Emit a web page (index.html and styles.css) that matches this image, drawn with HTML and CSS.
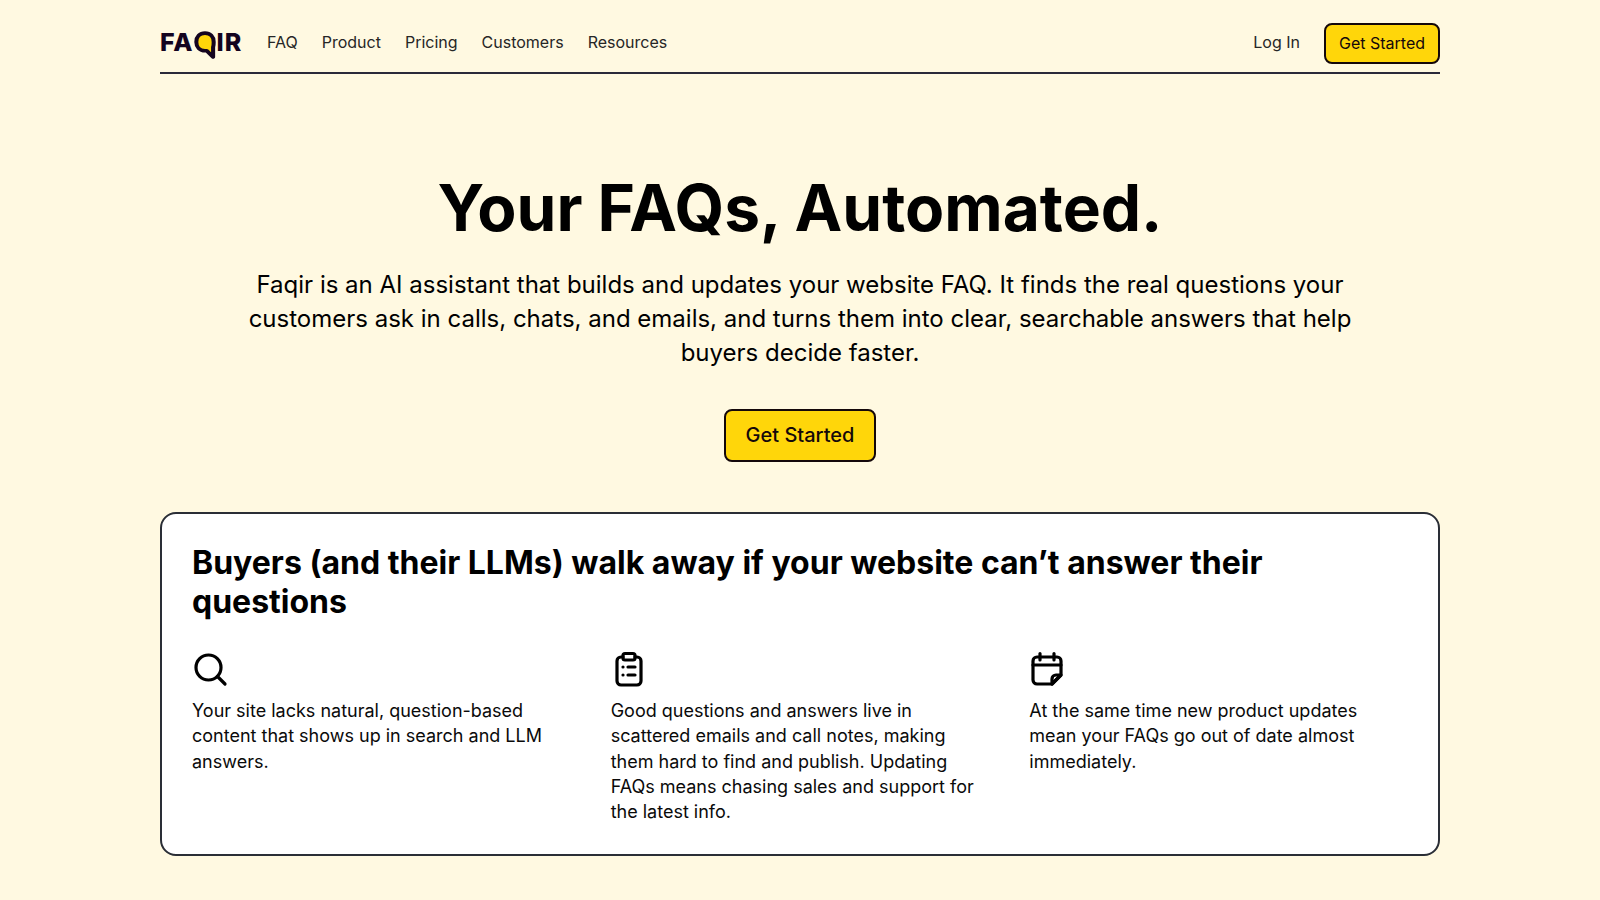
FILE: index.html
```html
<!DOCTYPE html>
<html lang="en">
<head>
<meta charset="utf-8">
<title>Faqir</title>
<link rel="stylesheet" href="styles.css">
</head>
<body>
<div class="page">
  <header class="nav">
    <a class="logo" href="#"><span>FA</span><svg class="logo-q" viewBox="0 0 19 27" preserveAspectRatio="none" aria-hidden="true"><path d="M9.500 2C5 2 2 5.500 2 10.500S5 19 9.500 19H11L16.500 25V15.500C17 14 17 12 17 10.500 17 5.500 14 2 9.500 2z" fill="#ffd60a" stroke="#14041f" stroke-width="3.500" stroke-linejoin="round"/></svg><span>IR</span></a>
    <nav class="links">
      <a href="#">FAQ</a><a href="#">Product</a><a href="#">Pricing</a><a href="#">Customers</a><a href="#">Resources</a>
    </nav>
    <div class="actions">
      <a class="login" href="#">Log In</a>
      <a class="btn btn-small" href="#">Get Started</a>
    </div>
  </header>

  <section class="hero">
    <h1>Your FAQs, Automated.</h1>
    <p>Faqir is an AI assistant that builds and updates your website FAQ. It finds the real questions your customers ask in calls, chats, and emails, and turns them into clear, searchable answers that help buyers decide faster.</p>
    <a class="btn btn-large" href="#">Get Started</a>
  </section>

  <section class="card">
    <h2>Buyers (and their LLMs) walk away if your website can’t answer their questions</h2>
    <div class="cols">
      <div class="col">
        <svg class="icon" viewBox="0 0 36 36" aria-hidden="true"><circle cx="16.500" cy="16.500" r="12.500"/><path d="M25.500 25.500L33 33"/></svg>
        <p>Your site lacks natural, question-based content that shows up in search and LLM answers.</p>
      </div>
      <div class="col">
        <svg class="icon" viewBox="0 0 36 36" aria-hidden="true"><path d="M12 6H10a4 4 0 0 0-4 4v20a4 4 0 0 0 4 4h16a4 4 0 0 0 4-4V10a4 4 0 0 0-4-4h-2"/><rect x="12" y="2.500" width="12" height="6.500" rx="2"/><path d="M12 16h.01M12 24h.01M17 16h7M17 24h7"/></svg>
        <p>Good questions and answers live in scattered emails and call notes, making them hard to find and publish. Updating FAQs means chasing sales and support for the latest info.</p>
      </div>
      <div class="col">
        <svg class="icon" viewBox="0 0 36 36" aria-hidden="true"><path d="M23 33H8a4 4 0 0 1-4-4V10a4 4 0 0 1 4-4h20a4 4 0 0 1 4 4v14z"/><path d="M4 14h28M11 2.500V9M25 2.500V9"/><path d="M23 33v-5a4 4 0 0 1 4-4h5z"/></svg>
        <p>At the same time new product updates mean your FAQs go out of date almost immediately.</p>
      </div>
    </div>
  </section>
</div>
</body>
</html>
```
FILE: styles.css
```css
* { box-sizing: border-box; }
html, body { margin: 0; padding: 0; }
body {
  background: #fff9e1;
  color: #000;
  font-family: Inter, "Liberation Sans", sans-serif;
}
a { color: inherit; text-decoration: none; }
.page { width: 1280px; margin: 0 auto; }

.nav {
  display: flex;
  align-items: center;
  height: 74px;
  padding-top: 11px;
  border-bottom: 2px solid #2a2a3a;
}
.logo {
  display: flex;
  flex: none;
  align-items: center;
  width: 83px;
  height: 40px;
  font-weight: 800;
  font-size: 25px;
  letter-spacing: 1px;
  color: #14041f;
}
.logo-q { width: 22px; height: 28px; margin: 6px 1px 0 0; flex: none; }
.links { display: flex; gap: 24px; margin-left: 24px; font-size: 16px; color: #262626; }
.actions { display: flex; align-items: center; gap: 24px; margin-left: auto; font-size: 16px; }
.login { color: #262626; }

.btn {
  display: inline-flex;
  align-items: center;
  justify-content: center;
  background: #ffd60a;
  border: 2px solid #14080a;
  border-radius: 8px;
  color: #14080a;
}
.btn-small { width: 116px; height: 41px; font-size: 16px; margin-top: 3px; }
.btn-large { width: 152px; height: 53px; padding-bottom: 1px; font-size: 20px; font-weight: 500; }

.hero { display: flex; flex-direction: column; align-items: center; text-align: center; padding-top: 96px; }
.hero h1 { margin: 0; font-size: 64px; line-height: 76px; font-weight: 700; }
.hero p { margin: 22px 0 0; width: 1120px; font-size: 24px; line-height: 34px; }
.hero .btn { margin-top: 39px; }

.card {
  margin-top: 50px;
  height: 344px;
  padding: 29px 30px 0;
  background: #fff;
  border: 2px solid #2a2e36;
  border-radius: 16px;
}
.card h2 { margin: 0; font-size: 32px; line-height: 39px; font-weight: 700; }
.cols { display: grid; grid-template-columns: repeat(3, 1fr); gap: 40px; margin-top: 30px; }
.icon {
  display: block;
  width: 36px;
  height: 36px;
  fill: none;
  stroke: #000;
  stroke-width: 3.2;
  stroke-linecap: round;
  stroke-linejoin: round;
}
.col p { margin: 11.2px 0 0; font-size: 18px; line-height: 25.2px; color: #0a0a0a; }
```
